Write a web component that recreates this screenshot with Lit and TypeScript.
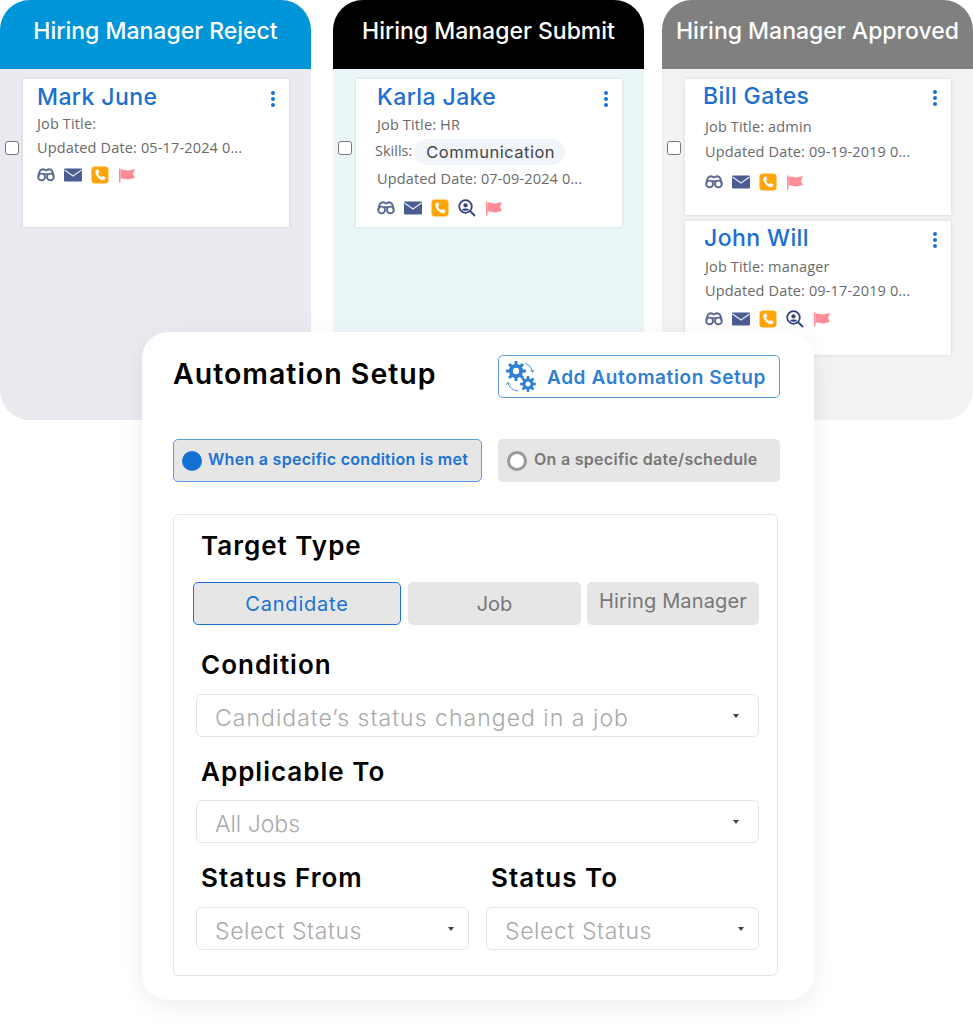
import { LitElement, html, css, svg } from "lit";
import { customElement } from "lit/decorators.js";

function gear(cx: number, cy: number, ro: number, ri: number, hole: number, teeth: number) {
  let d = "";
  const step = (Math.PI * 2) / teeth;
  for (let i = 0; i < teeth; i++) {
    const a = i * step;
    const pts: [number, number][] = [
      [ri, a - step * 0.5],
      [ri, a - step * 0.28],
      [ro, a - step * 0.18],
      [ro, a + step * 0.18],
      [ri, a + step * 0.28],
    ];
    for (const [r, t] of pts) {
      d += `${d ? "L" : "M"}${(cx + r * Math.cos(t)).toFixed(2)} ${(cy + r * Math.sin(t)).toFixed(2)}`;
    }
  }
  d += `Z M${cx + hole} ${cy}A${hole} ${hole} 0 1 0 ${cx - hole} ${cy}A${hole} ${hole} 0 1 0 ${cx + hole} ${cy}Z`;
  return d;
}

const binoculars = html`<svg class="ic" viewBox="0 0 18 18"><g fill="none" stroke="#5a6a92" stroke-width="1.900"><circle cx="4.600" cy="11" r="3.400"/><circle cx="13.400" cy="11" r="3.400"/><path d="M1.400 10.500C1.800 6.500 3.500 3.200 6 3.200 7.500 3.200 8 4.400 9 4.400S10.500 3.200 12 3.200C14.500 3.200 16.200 6.500 16.600 10.500"/><path d="M7 8.200h4"/></g></svg>`;
const mail = html`<svg class="ic" viewBox="0 0 18 18"><rect x="0" y="2.500" width="18" height="13" rx="1" fill="#4b5c91"/><path d="M0.500 4 9 10l8.500-6" fill="none" stroke="#e4e8f2" stroke-width="1.300"/></svg>`;
const phone = html`<svg class="ic" viewBox="0 0 18 18"><rect x="0.500" y="0.500" width="17" height="17" rx="3.500" fill="#ffa50a"/><path d="M5.500 3.800 7.300 3.400 8.300 6.300 7 7.400C7.600 9 8.800 10.400 10.500 11.200L11.700 10 14.500 11.400 14 13.300C13.500 14.200 12.500 14.500 11.500 14.200 7.800 13.200 4.800 9.800 4.300 6.300 4.200 5.200 4.700 4.300 5.500 3.800Z" fill="#fff"/></svg>`;
const search = html`<svg class="ic" viewBox="0 0 18 18"><circle cx="7.500" cy="7.500" r="6.300" fill="none" stroke="#33427f" stroke-width="1.800"/><circle cx="7.500" cy="6.300" r="2.100" fill="#33427f"/><path d="M3.800 10.800C4.800 9 10.200 9 11.200 10.800 9.500 12.200 5.500 12.200 3.800 10.800Z" fill="#33427f"/><path d="M12 12 17 17" stroke="#33427f" stroke-width="1.800"/></svg>`;
const flag = html`<svg class="ic" viewBox="0 0 18 18"><path d="M1 2.500h1.500v14H1Z" fill="#ff8d97"/><path d="M2.500 4C5.500 2.600 7.500 4.800 10 4.500 12 4.300 14.500 3.500 17 3L15 8 17 12C14 12.500 12 13.300 10 13.500 7.500 13.800 5.500 11.800 2.500 13Z" fill="#ff8d97"/></svg>`;

const gears = svg`<svg class="gears" viewBox="0 0 32 32">
  <path fill-rule="evenodd" fill="#2f7fd4" d="${gear(11, 10, 10, 7, 3.200, 8)}"/>
  <path fill-rule="evenodd" fill="#2f7fd4" d="${gear(23, 23, 8, 5.600, 2.500, 8)}"/>
  <path fill="none" stroke="#2f7fd4" stroke-width="0.900" d="M20 2.500C24 3.500 27 7 27.500 11M25.500 9l2 2.200 1.800-2.400"/>
  <path fill="none" stroke="#2f7fd4" stroke-width="0.900" d="M3 22C4 26 8 29.500 13 30M5 23.500l-2-2-1.800 2.300"/>
</svg>`;

interface Person {
  name: string;
  job: string;
  updated: string;
  skills?: string;
  search?: boolean;
  v: string;
}

const columns: { title: string; cls: string; people: Person[] }[] = [
  { title: "Hiring Manager Reject", cls: "blue", people: [
    { name: "Mark June", job: "Job Title:", updated: "Updated Date: 05-17-2024 0...", v: "v1" },
  ]},
  { title: "Hiring Manager Submit", cls: "black", people: [
    { name: "Karla Jake", job: "Job Title: HR", skills: "Communication", updated: "Updated Date: 07-09-2024 0...", search: true, v: "v2" },
  ]},
  { title: "Hiring Manager Approved", cls: "gray", people: [
    { name: "Bill Gates", job: "Job Title: admin", updated: "Updated Date: 09-19-2019 0...", v: "v3" },
    { name: "John Will", job: "Job Title: manager", updated: "Updated Date: 09-17-2019 0...", search: true, v: "v4" },
  ]},
];

@customElement("app-root")
export class AppRoot extends LitElement {
  static styles = css`
    :host {
      display: block;
      width: 973px;
      height: 1024px;
      position: relative;
      overflow: hidden;
      background: #fff;
      font-family: "Inter", "Noto Sans", sans-serif;
    }
    .board { display: flex; }
    .col {
      width: 311px;
      height: 420px;
      border-radius: 30px;
      overflow: hidden;
      flex: none;
    }
    .black { margin-left: 22px; background: #ebf6f9; }
    .gray { margin-left: 18px; background: #f2f2f2; }
    .blue { background: #e9ebf1; }
    .colhead {
      height: 62px;
      padding-bottom: 7px;
      display: flex;
      align-items: center;
      justify-content: center;
      color: #fff;
      font-size: 23px;
      font-weight: 450;
      white-space: nowrap;
    }
    .blue .colhead { background: #0095d9; }
    .black .colhead { background: #000; }
    .gray .colhead { background: #808080; }
    .colbody { display: flex; padding: 10px 0 0 5px; }
    .check { width: 14px; height: 14px; margin: 62px 4px 0 0; flex: none; }
    .cards { display: flex; flex-direction: column; gap: 6px; }
    .card {
      width: 266px;
      box-sizing: border-box;
      background: #fff;
      box-shadow: 0 0 3px rgba(0, 0, 0, 0.12);
      padding: var(--pt) 0 0 var(--pl);
      height: var(--h);
    }
    .v1 { --pl: 14px; --pt: 3px; --h: 148px; --job: 0px; --upd: 0px; --ic: 6px; --lx: 0px; }
    .v2 { --pl: 21px; --pt: 3px; --h: 148px; --job: 1px; --upd: 2px; --ic: 8px; --lx: 0px; }
    .v3 { --pl: 18px; --pt: 2px; --h: 136px; --job: 4px; --upd: 1px; --ic: 9px; --lx: 2px; }
    .v4 { --pl: 19px; --pt: 2px; --h: 134px; --job: 2px; --upd: 0px; --ic: 7px; --lx: 1px; }
    .namerow {
      display: flex;
      align-items: center;
      justify-content: space-between;
      height: 30px;
      padding-right: 14px;
    }
    .name { color: #1a6fd0; font-size: 23px; letter-spacing: 0.400px; font-weight: 550; white-space: nowrap; }
    .dots { display: flex; flex-direction: column; gap: 1.500px; margin-top: 4px; }
    .dots i { width: 4.500px; height: 4.500px; border-radius: 50%; background: #1a6fd0; display: block; }
    .line {
      font-family: "Open Sans", "Noto Sans", sans-serif;
      font-size: 14.500px;
      letter-spacing: 0.150px;
      line-height: 24px;
      color: #6a6a6a;
      white-space: nowrap;
      margin-left: var(--lx);
    }
    .job { margin-top: var(--job); }
    .upd { margin-top: var(--upd); }
    .skills {
      display: flex;
      align-items: center;
      gap: 3px;
      height: 26px;
      margin: 2px 0 0 -2px;
      font-family: "Open Sans", "Noto Sans", sans-serif;
      font-size: 14.500px;
      color: #6a6a6a;
    }
    .skills > span:first-child { margin-top: -4px; }
    .chip {
      height: 26px;
      line-height: 26px;
      padding: 0 10px 0 11px;
      border-radius: 13px;
      background: #f1f4f8;
      color: #444;
      font-family: "Inter", sans-serif;
      font-size: 16.500px;
      letter-spacing: 0.500px;
    }
    .icons { display: flex; gap: 9px; margin-top: var(--ic); margin-left: var(--lx); }
    .ic { width: 18px; height: 18px; display: block; flex: none; }

    .panel {
      position: absolute;
      left: 142px;
      top: 332px;
      width: 672px;
      height: 668px;
      box-sizing: border-box;
      padding: 23px 34px 0 31px;
      background: #fff;
      border-radius: 26px;
      box-shadow: 0 6px 24px rgba(0, 0, 0, 0.07);
    }
    .top { display: flex; justify-content: space-between; }
    h1 {
      margin: 0;
      font-size: 28.500px;
      letter-spacing: 1px;
      font-weight: 600;
      line-height: 38px;
      color: #000;
      white-space: nowrap;
    }
    .add {
      width: 282px;
      height: 43px;
      box-sizing: border-box;
      border: 1px solid #5c9fe0;
      border-radius: 5px;
      display: flex;
      align-items: center;
      padding-left: 6px;
      gap: 10px;
      color: #2f7fd4;
      font-size: 19px;
      letter-spacing: 0.600px;
      font-weight: 600;
      white-space: nowrap;
    }
    .add span { padding-top: 2px; }
    .gears { width: 32px; height: 32px; flex: none; }
    .modes { display: flex; gap: 16px; margin-top: 41px; }
    .mode {
      height: 43px;
      box-sizing: border-box;
      background: #e6e6e6;
      border-radius: 5px;
      display: flex;
      align-items: center;
      white-space: nowrap;
      font-size: 16px;
      letter-spacing: 0.280px;
      font-weight: 600;
    }
    .mode span:last-child { padding-bottom: 3px; }
    .mode.on { width: 309px; border: 1px solid #5a9be0; color: #1a72d2; padding-left: 8px; gap: 6px; }
    .mode.off { width: 282px; color: #777; padding-left: 9px; gap: 7px; }
    .dot { width: 20px; height: 20px; border-radius: 50%; background: #1272d3; flex: none; }
    .ring { width: 20px; height: 20px; box-sizing: border-box; border-radius: 50%; border: 3px solid #999; background: #fff; flex: none; }
    .box {
      width: 605px;
      height: 462px;
      box-sizing: border-box;
      margin-top: 32px;
      border: 1px solid #e5e5e5;
      border-radius: 6px;
      padding: 0 0 0 19px;
    }
    .label {
      font-size: 26px;
      letter-spacing: 1px;
      font-weight: 600;
      line-height: 34px;
      color: #000;
      margin-left: 8px;
      white-space: nowrap;
    }
    .l1 { margin-top: 14px; }
    .l2 { margin-top: 23px; }
    .l3 { margin-top: 18px; }
    .segs { display: flex; margin-top: 19px; }
    .seg {
      height: 43px;
      box-sizing: border-box;
      background: #e6e6e6;
      border-radius: 5px;
      display: flex;
      align-items: center;
      justify-content: center;
      font-size: 20px;
      color: #777;
      white-space: nowrap;
    }
    .seg.cand { width: 208px; border: 1px solid #1a72d2; color: #1a72d2; letter-spacing: 0.800px; }
    .seg.job { width: 173px; margin-left: 7px; }
    .seg.hm { width: 172px; margin-left: 6px; padding-bottom: 6px; letter-spacing: 0.150px; }
    .sel {
      height: 43px;
      box-sizing: border-box;
      margin-left: 3px;
      border: 1px solid #e6e6e6;
      border-radius: 6px;
      padding: 5px 19px 0 18px;
      display: flex;
      align-items: center;
      justify-content: space-between;
      color: #aaa;
      font-size: 23px;
      font-weight: 300;
      white-space: nowrap;
    }
    .long { letter-spacing: 1.030px; }
    .wide { width: 563px; margin-top: 12px; }
    .wide.a { margin-top: 11px; }
    .caret {
      width: 0;
      height: 0;
      border-left: 3.500px solid transparent;
      border-right: 3.500px solid transparent;
      border-top: 4px solid #444;
      margin-bottom: 4px;
    }
    .status { display: grid; grid-template-columns: 276px 270px; column-gap: 17px; }
    .status .label { margin-left: 8px; }
    .status .sel { margin-top: 12px; padding-right: 14px; letter-spacing: 0.600px; }
    .status .s1 { width: 273px; }
    .status .s2 { width: 273px; margin-left: 0; }
    .status > div:last-child .label { margin-left: 5px; }
  `;

  private renderCard(p: Person) {
    return html`<div class="card ${p.v}">
      <div class="namerow">
        <span class="name">${p.name}</span>
        <span class="dots"><i></i><i></i><i></i></span>
      </div>
      <div class="line job">${p.job}</div>
      ${p.skills
        ? html`<div class="skills"><span>Skills:</span><span class="chip">${p.skills}</span></div>`
        : ""}
      <div class="line upd">${p.updated}</div>
      <div class="icons">
        ${binoculars}${mail}${phone}${p.search ? search : ""}${flag}
      </div>
    </div>`;
  }

  render() {
    return html`
      <div class="board">
        ${columns.map(
          (c) => html`<section class="col ${c.cls}">
            <div class="colhead">${c.title}</div>
            <div class="colbody">
              <input class="check" type="checkbox" />
              <div class="cards">${c.people.map((p) => this.renderCard(p))}</div>
            </div>
          </section>`
        )}
      </div>
      <div class="panel">
        <div class="top">
          <h1>Automation Setup</h1>
          <div class="add">${gears}<span>Add Automation Setup</span></div>
        </div>
        <div class="modes">
          <div class="mode on"><span class="dot"></span><span>When a specific condition is met</span></div>
          <div class="mode off"><span class="ring"></span><span>On a specific date/schedule</span></div>
        </div>
        <div class="box">
          <div class="label l1">Target Type</div>
          <div class="segs">
            <div class="seg cand">Candidate</div>
            <div class="seg job">Job</div>
            <div class="seg hm">Hiring Manager</div>
          </div>
          <div class="label l2">Condition</div>
          <div class="sel wide"><span class="long">Candidate’s status changed in a job</span><span class="caret"></span></div>
          <div class="label l3">Applicable To</div>
          <div class="sel wide a"><span>All Jobs</span><span class="caret"></span></div>
          <div class="status">
            <div>
              <div class="label l3">Status From</div>
              <div class="sel s1"><span>Select Status</span><span class="caret"></span></div>
            </div>
            <div>
              <div class="label l3">Status To</div>
              <div class="sel s2"><span>Select Status</span><span class="caret"></span></div>
            </div>
          </div>
        </div>
      </div>
    `;
  }
}
